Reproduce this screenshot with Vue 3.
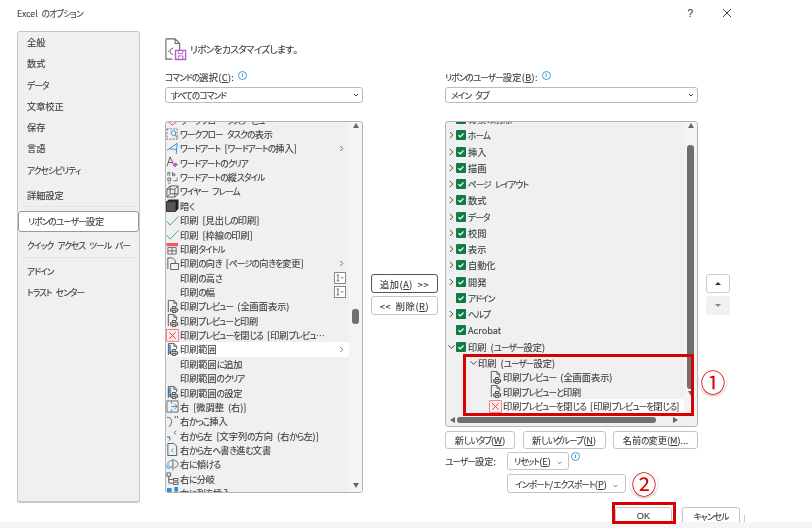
<template>
  <div class="page">
    <div class="dialog">
      <div class="titlebar">
        <span class="title"><Jp text="Excel のオプション" /></span>
        <span class="help">?</span>
        <svg class="close" viewBox="0 0 10 10"><path d="M1 1l8 8M9 1l-8 8" /></svg>
      </div>

      <div class="body">
        <nav class="sidebar">
          <template v-for="item in navItems" :key="item.label">
            <div v-if="item.divider" class="nav-divider"></div>
            <div v-else class="nav-item" :class="{ active: item.active, spaced: item.spaced }"><Jp :text="item.label" /></div>
          </template>
        </nav>

        <div class="main">
          <div class="heading">
            <svg class="heading-icon" viewBox="0 0 24 24">
              <path d="M1 1h10l5 5v7M11 1v5h5M8 23H1V1" fill="none" stroke="#666" stroke-width="1.200" />
              <path d="M9 11a3.500 3.500 0 1 0 0 7M5 14.500l-2 0" fill="none" stroke="#666" />
              <path d="M11.500 13.500h11v10h-11z" fill="#fff" stroke="#b45cc8" stroke-width="1.500" />
              <path d="M14.500 14v3h5v-3M14.500 23v-3.500h5v3.500" fill="none" stroke="#b45cc8" />
            </svg>
            <span><Jp text="リボンをカスタマイズします。" /></span>
          </div>

          <div class="columns">
            <section class="col-left">
              <label class="field-label"><Jp text="コマンドの選択(_C):" /><span class="info">i</span></label>
              <div class="select">
                <span><Jp text="すべてのコマンド" /></span>
                <svg class="select-arrow" viewBox="0 0 6 4"><path d="M1 1l2 2 2-2" /></svg>
              </div>
              <div class="list command-list">
                <div class="rows command-rows">
                  <div v-for="row in commands" :key="row.label" class="command" :class="{ selected: row.selected }">
                    <svg class="cmd-icon" viewBox="0 0 14 14">
                      <path v-for="(p, i) in icons[row.icon]" :key="i" :d="p.d" :fill="p.fill || 'none'" :stroke="p.stroke || 'none'" :stroke-dasharray="p.dash" />
                    </svg>
                    <span class="command-label"><Jp :text="row.label" /></span>
                    <svg v-if="row.sub" class="sub-arrow" viewBox="0 0 6 8"><path d="M1.500 1l3 3-3 3" /></svg>
                    <span v-if="row.box" class="size-box">
                      <svg viewBox="0 0 12 12"><path d="M2 2.500h3M2 9.500h3M3.500 2.500v7M7 5l1.500 1.500L10 5" /></svg>
                    </span>
                  </div>
                </div>
                <div class="vscroll">
                  <span class="tri up"></span>
                  <span class="thumb command-thumb"></span>
                  <span class="tri down"></span>
                </div>
              </div>
            </section>

            <section class="col-mid">
              <button class="btn add"><Jp text="追加(_A) >>" /></button>
              <button class="btn remove"><Jp text="<< 削除(_R)" /></button>
            </section>

            <section class="col-right">
              <label class="field-label"><Jp text="リボンのユーザー設定(_B):" /><span class="info">i</span></label>
              <div class="select">
                <span><Jp text="メイン タブ" /></span>
                <svg class="select-arrow" viewBox="0 0 6 4"><path d="M1 1l2 2 2-2" /></svg>
              </div>
              <div class="list tree-list">
                <div class="tree-area">
                  <div class="rows tree-rows">
                    <div v-for="tab in tabs" :key="tab.label" class="tab">
                      <svg class="twisty" viewBox="0 0 8 8">
                        <path v-if="tab.open" d="M.5 2l3.500 3.500L7.500 2" />
                        <path v-else-if="tab.closed" d="M2 .5l3.500 3.500L2 7.500" />
                      </svg>
                      <svg class="check" viewBox="0 0 10 10">
                        <rect width="10" height="10" rx="1" fill="#107c41" />
                        <path d="M2.500 5.200l1.800 1.600 3.200-3.300" fill="none" stroke="#fff" stroke-width="1.200" />
                      </svg>
                      <span><Jp :text="tab.label" /></span>
                    </div>
                    <div class="group">
                      <svg class="twisty" viewBox="0 0 8 8"><path d="M.5 2l3.500 3.500L7.500 2" /></svg>
                      <span><Jp text="印刷 (ユーザー設定)" /></span>
                    </div>
                    <div v-for="row in customRows" :key="row.label" class="sub-command" :class="{ selected: row.selected }">
                      <svg class="cmd-icon" viewBox="0 0 14 14">
                        <path v-for="(p, i) in icons[row.icon]" :key="i" :d="p.d" :fill="p.fill || 'none'" :stroke="p.stroke || 'none'" />
                      </svg>
                      <span><Jp :text="row.label" /></span>
                    </div>
                  </div>
                  <div class="vscroll">
                    <span class="tri up"></span>
                    <span class="thumb tree-thumb"></span>
                    <span class="tri down tree-down"></span>
                  </div>
                </div>
                <div class="hscroll">
                  <span class="tri left"></span>
                  <span class="hthumb"></span>
                  <span class="tri right"></span>
                </div>
              </div>

              <div class="btn-row">
                <button class="btn tab-new"><Jp text="新しいタブ(_W)" /></button>
                <button class="btn group-new"><Jp text="新しいグループ(_N)" /></button>
                <button class="btn rename"><Jp text="名前の変更(_M)..." /></button>
              </div>
              <div class="custom-row">
                <span class="custom-label"><Jp text="ユーザー設定:" /></span>
                <button class="btn reset"><Jp text="リセット(_E)" /> <svg class="btn-arrow" viewBox="0 0 6 4"><path d="M1 1l2 2 2-2" /></svg></button>
                <span class="info reset-info">i</span>
              </div>
              <div class="import-row">
                <button class="btn import"><Jp text="インポート/エクスポート(_P)" /> <svg class="btn-arrow" viewBox="0 0 6 4"><path d="M1 1l2 2 2-2" /></svg></button>
                <span class="info">i</span>
              </div>
            </section>

            <section class="col-order">
              <button class="order-btn"><span class="tri small-up"></span></button>
              <button class="order-btn off"><span class="tri small-down"></span></button>
            </section>
          </div>

          <div class="footer">
            <button class="btn ok">OK</button>
            <button class="btn cancel"><Jp text="キャンセル" /></button>
            <span class="edge"></span>
          </div>
        </div>
      </div>
    </div>
    <div class="band"></div>

    <!-- annotations on top of the screenshot -->
    <div class="mark mark-list"></div>
    <div class="mark mark-ok"></div>
    <div class="badge badge-1">①</div>
    <div class="badge badge-2">②</div>
  </div>
</template>

<script setup>
import { h } from 'vue'

// Noto's kana are much wider than the dialog's UI font, so kana runs get squeezed.
// "_X" marks an underlined access key.
const Jp = (props) =>
  props.text
    .split(/([\u3041-\u30ff]+|_.)/)
    .filter(Boolean)
    .map((part) => {
      if (part[0] === '_') return h('u', part[1])
      if (/^[\u3041-\u30ff]/.test(part)) return h('span', { class: 'kana' }, part)
      return part
    })
Jp.props = ['text']

const doc = [{ d: 'M2.500 13V.5h6l3 3V6.500M8.500.5v3h3', stroke: '#555' }]
const printer = [
  { d: 'M7 7h3.500v2H7z', fill: '#fff', stroke: '#444' },
  { d: 'M5 9.500h7.500V12H5z', fill: '#fff', stroke: '#333' },
  { d: 'M7 11.500h3.500v2H7z', fill: '#fff', stroke: '#444' }
]

const icons = {
  stop: [{ d: 'M7 1l5 3v5l-5 4-5-4V4z', stroke: '#d9534f' }],
  flow: [
    { d: 'M1 1h11v11H1z', stroke: '#666', dash: '2 1.500' },
    { d: 'M5.500 5.500a2.500 2.500 0 1 0 5 0a2.500 2.500 0 1 0-5 0M9.500 7.500l3 3.500', stroke: '#2b8fd8' }
  ],
  wordart: [{ d: 'M1 9l11-7.500-1 11.500M4 7.500l7.500.5', stroke: '#2b8fd8' }],
  clear: [
    { d: 'M1 11L4.500 1 8 9M2.500 7h4', stroke: '#555' },
    { d: 'M7 10l3-3 3 2-3 3z', fill: '#c45ad0' }
  ],
  vertical: [
    { d: 'M2 5V1.500h2V5M7 1v4h2.500V3H7M2 7.500h3v3H2z', stroke: '#666' },
    { d: 'M2 13h3M12 7v3.500H8', stroke: '#2b8fd8' }
  ],
  wire: [{ d: 'M1 4.500h8.500V13H1zM1 4.500L4.500 1H13v8.500L9.500 13M9.500 4.500L13 1M4.500 1v8.500H13M4.500 9.500L1 13', stroke: '#555' }],
  dark: [
    { d: 'M.5 3h10v10.500H.5z', fill: '#555', stroke: '#333' },
    { d: 'M.5 3L3 .5h10.500v10l-3 3V3z', fill: '#222' }
  ],
  check: [{ d: 'M.5 7.500L4.500 12 13.500 2.500', stroke: '#3fa66f' }],
  title: [
    { d: 'M.5 1h12.500v3.500H.5z', fill: '#ec5a5a' },
    { d: 'M2 6h9v7H2zM2 9.500h9M6.500 6v7', stroke: '#666' }
  ],
  orient: [{ d: 'M2 13V1h5l3 3v3M5 7h8.500v6.500H5z', stroke: '#555' }],
  preview: [...doc, ...printer],
  close: [
    { d: 'M.5.5h13v13H.5z', fill: '#fdeaea', stroke: '#ee7b7b' },
    { d: 'M3.500 3.500l7 7M10.500 3.500l-7 7', stroke: '#e23b3b' }
  ],
  area: [{ d: 'M2.500 1.500h3v10h-3z', fill: '#5a9bd8' }, ...doc, ...printer],
  blank: [],
  nudge: [
    { d: 'M1 1h12v12H1z', stroke: '#666' },
    { d: 'M6 7h6M9 4l3 3-3 3M6 1v3M6 10v3', stroke: '#2b8fd8' }
  ],
  bracket: [
    { d: 'M1 2.500c4 0 5 2 5 4.500s-1.500 5-3 6', stroke: '#555' },
    { d: 'M10 1v2.500M12.500 1v2.500', stroke: '#555' }
  ],
  rtl: [
    { d: 'M1 8.500h3v2', stroke: '#555' },
    { d: 'M3 9.500L5 11l-2 1.500', stroke: '#2b8fd8' },
    { d: 'M11 2L8.500 4 11 6', stroke: '#2b8fd8' }
  ],
  docrtl: [
    { d: 'M2 13.500V.5h6.500l3 3v10z', stroke: '#555' },
    { d: 'M8 6L6 8l2 2', stroke: '#2b8fd8' }
  ],
  rotate: [
    { d: 'M7.500 1v12', stroke: '#555' },
    { d: 'M7 2.500c-3 0-5 1.500-5 4s2 3.500 5 3.500M.5 8l1.500 3 3-.5', stroke: '#2b8fd8' },
    { d: 'M9 2.500c2.500.5 4 2 4 4s-1.500 3.500-4 4', stroke: '#666' }
  ],
  branch: [{ d: 'M1 1h4v3.500H1zM8 7h5v2.500H8zM8 11h5v2.500H8zM3 4.500V12h5M3 8h5', stroke: '#555' }],
  insert: [
    { d: 'M1 1h5v5H1z', fill: '#2b8fd8' },
    { d: 'M9 0h4v5H9z', fill: '#2b8fd8' }
  ]
}

const navItems = [
  { label: '全般' },
  { label: '数式' },
  { label: 'データ' },
  { label: '文章校正' },
  { label: '保存' },
  { label: '言語' },
  { label: 'アクセシビリティ' },
  { label: '詳細設定', spaced: true },
  { label: 'div-1', divider: true },
  { label: 'リボンのユーザー設定', active: true },
  { label: 'クイック アクセス ツール バー', spaced: true },
  { label: 'div-2', divider: true },
  { label: 'アドイン', spaced: true },
  { label: 'トラスト センター' }
]

const commands = [
  { label: 'ワークフロー タスク ビュー', icon: 'stop' },
  { label: 'ワークフロー タスクの表示', icon: 'flow' },
  { label: 'ワードアート [ワードアートの挿入]', icon: 'wordart', sub: true },
  { label: 'ワードアートのクリア', icon: 'clear' },
  { label: 'ワードアートの縦スタイル', icon: 'vertical' },
  { label: 'ワイヤー フレーム', icon: 'wire' },
  { label: '暗く', icon: 'dark' },
  { label: '印刷 [見出しの印刷]', icon: 'check' },
  { label: '印刷 [枠線の印刷]', icon: 'check' },
  { label: '印刷タイトル', icon: 'title' },
  { label: '印刷の向き [ページの向きを変更]', icon: 'orient', sub: true },
  { label: '印刷の高さ', icon: 'blank', box: true },
  { label: '印刷の幅', icon: 'blank', box: true },
  { label: '印刷プレビュー (全画面表示)', icon: 'preview' },
  { label: '印刷プレビューと印刷', icon: 'preview' },
  { label: '印刷プレビューを閉じる [印刷プレビュ…', icon: 'close' },
  { label: '印刷範囲', icon: 'area', sub: true, selected: true },
  { label: '印刷範囲に追加', icon: 'blank' },
  { label: '印刷範囲のクリア', icon: 'blank' },
  { label: '印刷範囲の設定', icon: 'area' },
  { label: '右 [微調整 (右)]', icon: 'nudge' },
  { label: '右かっこ挿入', icon: 'bracket' },
  { label: '右から左 [文字列の方向 (右から左)]', icon: 'rtl' },
  { label: '右から左へ書き進む文書', icon: 'docrtl' },
  { label: '右に傾ける', icon: 'rotate' },
  { label: '右に分岐', icon: 'branch' },
  { label: '右に列を挿入', icon: 'insert' }
]

const tabs = [
  { label: '背景の削除', closed: true },
  { label: 'ホーム', closed: true },
  { label: '挿入', closed: true },
  { label: '描画', closed: true },
  { label: 'ページ レイアウト', closed: true },
  { label: '数式', closed: true },
  { label: 'データ', closed: true },
  { label: '校閲', closed: true },
  { label: '表示', closed: true },
  { label: '自動化', closed: true },
  { label: '開発', closed: true },
  { label: 'アドイン' },
  { label: 'ヘルプ', closed: true },
  { label: 'Acrobat' },
  { label: '印刷 (ユーザー設定)', open: true }
]

const customRows = [
  { label: '印刷プレビュー (全画面表示)', icon: 'preview' },
  { label: '印刷プレビューと印刷', icon: 'preview' },
  { label: '印刷プレビューを閉じる [印刷プレビューを閉じる]', icon: 'close', selected: true }
]
</script>

<style>
html, body {
  margin: 0;
  background: #fff;
}

.kana {
  font-size: 8.600px;
  letter-spacing: -0.850px;
}

.heading .kana {
  font-size: 9.600px;
  letter-spacing: -0.650px;
}
</style>

<style scoped>
.page {
  position: relative;
  width: 812px;
  height: 528px;
  overflow: hidden;
  background: #fff;
  color: #3d3d3d;
  font-family: "Noto Sans CJK JP", "Noto Sans", sans-serif;
  font-size: 9.200px;
  font-feature-settings: "palt";
  word-spacing: 2px;
  -webkit-text-stroke: 0.12px #3d3d3d;
  filter: blur(0.35px);
}

.dialog {
  height: 522px;
  overflow: hidden;
}

.band {
  height: 6px;
  background: #f5f5f5;
}

.titlebar {
  display: flex;
  align-items: center;
  height: 26px;
  padding: 0 80px 0 17px;
}

.title {
  flex: 1;
  font-size: 8.800px;
  color: #555;
}

.help {
  font-family: "Liberation Sans", sans-serif;
  font-size: 10px;
  margin-right: 29px;
}

.close {
  width: 10px;
  height: 10px;
  fill: none;
  stroke: #444;
}

.body {
  display: flex;
  padding: 5px 0 0 17px;
}

.sidebar {
  box-sizing: border-box;
  width: 123px;
  height: 472px;
  background: #f0f0f0;
  border: 1px solid #c6c6c6;
  border-bottom-width: 2px;
  border-radius: 3px;
}

.nav-item {
  height: 21.300px;
  line-height: 21.300px;
  padding-left: 9px;
  white-space: nowrap;
}

.nav-item.spaced {
  margin-top: 3.500px;
}

.nav-item.active {
  box-sizing: border-box;
  height: 21px;
  line-height: 19px;
  margin: 4px 0 1px;
  background: #fff;
  border: 1px solid #999;
  border-radius: 3px;
}

.nav-divider {
  height: 1px;
  margin: 0 5px 0.500px;
  background: #e2e2e2;
}

.main {
  margin-left: 25px;
  width: 620px;
}

.heading {
  display: flex;
  align-items: center;
  gap: 3px;
  height: 24px;
  margin-top: 6px;
  font-size: 9.600px;
}

.heading-icon {
  width: 22px;
  height: 24px;
}

.columns {
  display: flex;
  margin-top: 9px;
}

.col-left {
  width: 198px;
}

.col-mid {
  display: flex;
  flex-direction: column;
  gap: 3px;
  width: 67px;
  margin: 204px 0 0 8px;
}

.col-right {
  width: 253px;
  margin-left: 7px;
}

.col-order {
  display: flex;
  flex-direction: column;
  gap: 3px;
  width: 24px;
  margin: 204px 0 0 8px;
}

.field-label {
  display: flex;
  align-items: center;
  height: 14px;
  letter-spacing: 0.300px;
  white-space: pre;
}

.info {
  display: inline-block;
  box-sizing: border-box;
  width: 9px;
  height: 9px;
  margin: -3px 0 0 4px;
  border: 1px solid #3f9be0;
  border-radius: 50%;
  color: #2b8fd8;
  font-family: "Liberation Sans", sans-serif;
  font-size: 6px;
  font-weight: bold;
  line-height: 7px;
  text-align: center;
  -webkit-text-stroke: 0;
}

.select {
  box-sizing: border-box;
  display: flex;
  align-items: center;
  justify-content: space-between;
  height: 16px;
  margin: 2.500px 0 18.500px;
  padding: 0 3px 0 5px;
  background: #fff;
  border: 1px solid #bbb;
  border-radius: 3px;
}

.select-arrow {
  width: 6px;
  height: 4px;
  fill: none;
  stroke: #444;
}

.list {
  box-sizing: border-box;
  overflow: hidden;
  background: #f0f0f0;
  border: 1px solid #b5b5b5;
  border-radius: 3px;
}

.command-list {
  display: flex;
  height: 372px;
}

.rows {
  flex: 1;
  min-width: 0;
}

.command-rows {
  margin-top: -9.500px;
}

.command {
  display: flex;
  align-items: center;
  height: 14.370px;
  padding-right: 3px;
  white-space: nowrap;
}

.command.selected,
.sub-command.selected {
  background: #fff;
  border-radius: 2px;
}

.cmd-icon {
  flex: none;
  width: 13px;
  height: 13px;
  margin-right: 1px;
}

.command-label {
  flex: 1;
}

.sub-arrow {
  width: 5px;
  height: 7px;
  margin-right: 2px;
  fill: none;
  stroke: #555;
}

.size-box {
  box-sizing: border-box;
  width: 12px;
  height: 12px;
  background: #fff;
  border: 1px solid #888;
}

.size-box svg {
  display: block;
  width: 10px;
  height: 10px;
  fill: none;
  stroke: #555;
}

.vscroll {
  flex: none;
  display: flex;
  flex-direction: column;
  align-items: center;
  width: 13px;
  background: #f4f4f4;
}

.thumb {
  width: 7px;
  background: #6f6f6f;
  border-radius: 3px;
}

.command-thumb {
  height: 15px;
  margin-top: 181px;
}

.tree-thumb {
  height: 244px;
  margin-top: 17px;
}

.tri {
  display: block;
  width: 0;
  height: 0;
  border: 3.500px solid transparent;
}

.tri.up {
  margin-top: 1px;
  border-top: 0;
  border-bottom: 5px solid #666;
}

.tri.down {
  margin-top: auto;
  margin-bottom: 4px;
  border-bottom: 0;
  border-top: 5px solid #666;
}

.tri.tree-down {
  margin: 2px 0 0;
}

.tri.left {
  border-left: 0;
  border-right: 5px solid #666;
}

.tri.right {
  margin-left: 17px;
  border-right: 0;
  border-left: 5px solid #666;
}

.tree-list {
  height: 306px;
}

.tree-area {
  display: flex;
  height: 291px;
  overflow: hidden;
}

.tree-rows {
  margin-top: -11px;
}

.tab {
  display: flex;
  align-items: center;
  height: 16.250px;
  padding-left: 2px;
  white-space: nowrap;
}

.twisty {
  flex: none;
  width: 7px;
  height: 8px;
  margin-right: 1px;
  fill: none;
  stroke: #333;
}

.check {
  flex: none;
  width: 10px;
  height: 10px;
  margin-right: 2px;
}

.group {
  display: flex;
  align-items: center;
  height: 14.400px;
  margin-top: 1px;
  padding-left: 24px;
  white-space: nowrap;
}

.sub-command {
  display: flex;
  align-items: center;
  height: 14.400px;
  margin-left: 43px;
  white-space: nowrap;
}

.hscroll {
  display: flex;
  align-items: center;
  height: 13px;
  padding-left: 4px;
}

.hthumb {
  width: 199px;
  height: 6px;
  margin-left: 2px;
  background: #6f6f6f;
  border-radius: 3px;
}

.btn {
  box-sizing: border-box;
  height: 18px;
  padding: 0;
  background: #fff;
  border: 1px solid #c4c4c4;
  border-radius: 3px;
  color: inherit;
  font: inherit;
  font-feature-settings: inherit;
  word-spacing: inherit;
  white-space: nowrap;
}

.btn.add {
  height: 19px;
  border: 1.500px solid #555;
  letter-spacing: 0.600px;
}

.btn.remove {
  height: 19px;
  letter-spacing: 0.600px;
}

.btn-row {
  display: flex;
  justify-content: space-between;
  margin-top: 4px;
}

.tab-new { width: 70px; }
.group-new { width: 83px; }
.rename { width: 85px; }

.custom-row {
  display: flex;
  align-items: center;
  height: 18px;
  margin-top: 3px;
}

.custom-label {
  width: 62px;
}

.reset {
  width: 62px;
}

.reset-info {
  margin: -9px 0 0 2px;
}

.import-row {
  display: flex;
  align-items: center;
  margin: 4px 0 0 62px;
}

.import {
  width: 119px;
  height: 19px;
}

.btn-arrow {
  width: 5px;
  height: 4px;
  margin-left: 2px;
  fill: none;
  stroke: #555;
}

.order-btn {
  box-sizing: border-box;
  display: flex;
  align-items: center;
  justify-content: center;
  height: 19px;
  padding: 0;
  background: #fff;
  border: 1px solid #ccc;
  border-radius: 3px;
}

.order-btn.off {
  background: #f0f0f0;
  border-color: #f0f0f0;
}

.tri.small-up {
  border-width: 0 3px 3px;
  border-bottom-color: #333;
}

.tri.small-down {
  border-width: 3px 3px 0;
  border-top-color: #888;
}

.footer {
  display: flex;
  align-items: flex-start;
  margin: 14px 0 0 450px;
}

.ok {
  width: 57px;
  height: 18px;
  font-family: "Liberation Sans", sans-serif;
}

.cancel {
  width: 58px;
  height: 18px;
  margin-left: 10px;
}

.edge {
  width: 1px;
  height: 8px;
  margin: 8px 0 0 4px;
  background: #ccc;
}

.mark {
  position: absolute;
  box-sizing: border-box;
  border: 3px solid #d80000;
}

.mark-list {
  left: 463px;
  top: 354px;
  width: 231px;
  height: 62px;
}

.mark-ok {
  left: 612px;
  top: 502px;
  width: 64px;
  height: 22px;
}

.badge {
  position: absolute;
  width: 28px;
  height: 28px;
  background: #fff;
  border-radius: 50%;
  box-shadow: 0 1px 2px rgba(0, 0, 0, 0.25);
  color: #d80000;
  font-size: 25px;
  font-feature-settings: normal;
  line-height: 28px;
  text-align: center;
  -webkit-text-stroke: 0;
}

.badge-1 {
  left: 699px;
  top: 367px;
}

.badge-2 {
  left: 630px;
  top: 469px;
}
</style>
